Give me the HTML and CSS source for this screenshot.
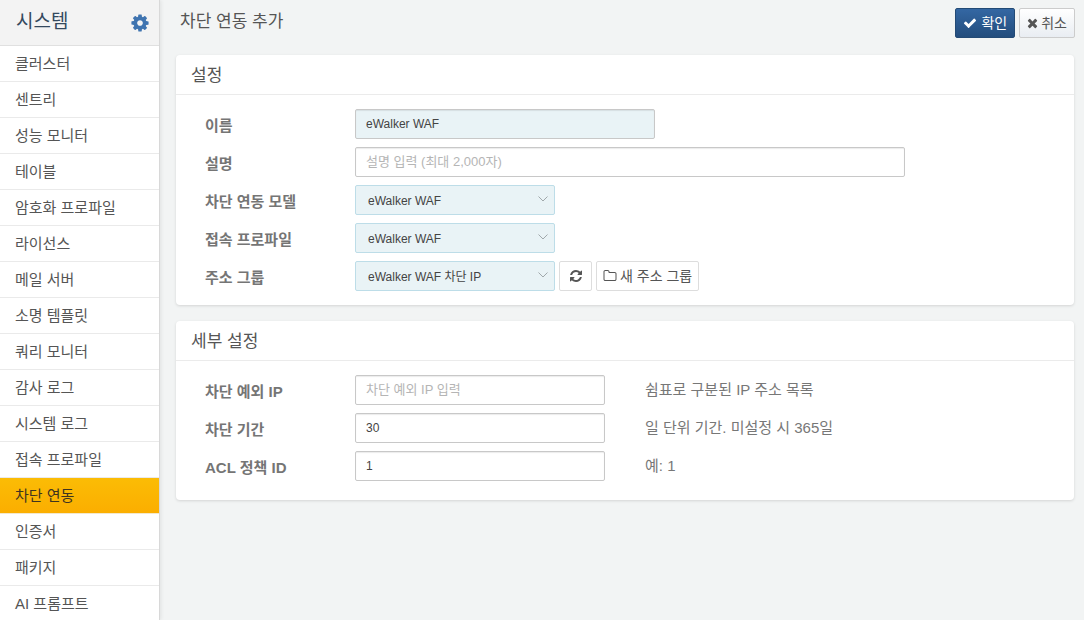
FILE: index.html
```html
<!DOCTYPE html>
<html lang="ko">
<head>
<meta charset="utf-8">
<meta name="viewport" content="width=device-width, initial-scale=1">
<title>차단 연동 추가</title>
<link rel="stylesheet" href="styles.css">
</head>
<body>
<aside class="sidebar">
  <header class="sidebar-head">
    <h2 class="sidebar-title">시스템</h2>
    <button class="gear" type="button" aria-label="시스템 설정"><svg viewBox="0 0 1792 1792" width="20" height="20"><path d="M1152 896q0-106-75-181t-181-75-181 75-75 181 75 181 181 75 181-75 75-181zm512-109v222q0 12-8 23t-20 13l-185 28q-19 54-39 91 35 50 107 138 10 12 10 25t-9 23q-27 37-99 108t-94 71q-12 0-26-9l-138-108q-44 23-91 38-16 136-29 186-7 28-36 28h-222q-14 0-24.500-8.500t-11.500-21.500l-28-184q-49-16-90-37l-141 107q-10 9-25 9-14 0-25-11-126-114-165-168-7-10-7-23 0-12 8-23 15-21 51-66.500t54-70.500q-27-50-41-99l-183-27q-13-2-21-12.500t-8-23.500v-222q0-12 8-23t19-13l186-28q14-46 39-92-40-57-107-138-10-12-10-24 0-10 9-23 26-36 98.500-107.500t94.500-71.500q13 0 26 10l138 107q44-23 91-38 16-136 29-186 7-28 36-28h222q14 0 24.500 8.500t11.500 21.500l28 184q49 16 90 37l142-107q9-9 24-9 13 0 25 10 129 119 165 170 7 8 7 22 0 12-8 23-15 21-51 66.500t-54 70.500q26 50 41 98l183 28q13 2 21 12.500t8 23.500z"/></svg></button>
  </header>
  <nav class="menu">
    <a class="menu-item" href="#">클러스터</a>
    <a class="menu-item" href="#">센트리</a>
    <a class="menu-item" href="#">성능 모니터</a>
    <a class="menu-item" href="#">테이블</a>
    <a class="menu-item" href="#">암호화 프로파일</a>
    <a class="menu-item" href="#">라이선스</a>
    <a class="menu-item" href="#">메일 서버</a>
    <a class="menu-item" href="#">소명 템플릿</a>
    <a class="menu-item" href="#">쿼리 모니터</a>
    <a class="menu-item" href="#">감사 로그</a>
    <a class="menu-item" href="#">시스템 로그</a>
    <a class="menu-item" href="#">접속 프로파일</a>
    <a class="menu-item active" href="#" aria-current="page">차단 연동</a>
    <a class="menu-item" href="#">인증서</a>
    <a class="menu-item" href="#">패키지</a>
    <a class="menu-item" href="#">AI 프롬프트</a>
  </nav>
</aside>
<main class="content">
  <header class="page-head">
    <h1 class="page-title">차단 연동 추가</h1>
    <div class="actions">
      <button class="btn btn-primary" type="submit" form="settings"><svg viewBox="0 0 1792 1792" width="14" height="14"><path d="M1671 566q0 40-28 68l-724 724-136 136q-28 28-68 28t-68-28l-136-136-362-362q-28-28-28-68t28-68l136-136q28-28 68-28t68 28l294 295 656-657q28-28 68-28t68 28l136 136q28 28 28 68z"/></svg>확인</button>
      <button class="btn btn-default" type="button"><svg viewBox="192 0 1408 1792" width="11" height="14"><path d="M1490 1322q0 40-28 68l-136 136q-28 28-68 28t-68-28l-294-294-294 294q-28 28-68 28t-68-28l-136-136q-28-28-28-68t28-68l294-294-294-294q-28-28-28-68t28-68l136-136q28-28 68-28t68 28l294 294 294-294q28-28 68-28t68 28l136 136q28 28 28 68t-28 68l-294 294 294 294q28 28 28 68z"/></svg>취소</button>
    </div>
  </header>
  <form class="cards" id="settings">
    <section class="card">
      <h3 class="card-title">설정</h3>
      <div class="card-body">
        <div class="row">
          <label class="label" for="name">이름</label>
          <input class="text text-medium filled" id="name" type="text" value="eWalker WAF">
        </div>
        <div class="row">
          <label class="label" for="desc">설명</label>
          <input class="text text-wide" id="desc" type="text" placeholder="설명 입력 (최대 2,000자)">
        </div>
        <div class="row">
          <label class="label" for="model">차단 연동 모델</label>
          <div class="select-wrap">
            <select class="select" id="model"><option>eWalker WAF</option></select>
            <svg class="chevron" viewBox="0 0 10 6" width="10" height="6"><path d="M.5.500 5 5 9.500.500"/></svg>
          </div>
        </div>
        <div class="row">
          <label class="label" for="profile">접속 프로파일</label>
          <div class="select-wrap">
            <select class="select" id="profile"><option>eWalker WAF</option></select>
            <svg class="chevron" viewBox="0 0 10 6" width="10" height="6"><path d="M.5.500 5 5 9.500.500"/></svg>
          </div>
        </div>
        <div class="row">
          <label class="label" for="group">주소 그룹</label>
          <div class="group-controls">
            <div class="select-wrap">
              <select class="select" id="group"><option>eWalker WAF 차단 IP</option></select>
              <svg class="chevron" viewBox="0 0 10 6" width="10" height="6"><path d="M.5.500 5 5 9.500.500"/></svg>
            </div>
            <button class="btn btn-light btn-icon" type="button" aria-label="새로 고침"><svg viewBox="0 0 1792 1792" width="14" height="14"><path d="M1639 1056q0 5-1 7-64 268-268 434.500t-478 166.500q-146 0-282.500-55t-243.500-157l-129 129q-19 19-45 19t-45-19-19-45v-448q0-26 19-45t45-19h448q26 0 45 19t19 45-19 45l-137 137q71 66 161 102t187 36q134 0 250-65t186-179q11-17 53-117 8-23 30-23h192q13 0 22.500 9.500t9.500 22.500zm25-800v448q0 26-19 45t-45 19h-448q-26 0-45-19t-19-45 19-45l138-138q-148-137-349-137-134 0-250 65t-186 179q-11 17-53 117-8 23-30 23h-199q-13 0-22.500-9.500t-9.500-22.500v-7q65-268 270-434.500t480-166.500q146 0 284 55.500t245 156.500l130-129q19-19 45-19t45 19 19 45z"/></svg></button>
            <button class="btn btn-light" type="button"><svg viewBox="0 0 1792 1792" width="14" height="14"><path d="M1600 1312v-704q0-40-28-68t-68-28h-704q-40 0-68-28t-28-68v-64q0-40-28-68t-68-28h-320q-40 0-68 28t-28 68v960q0 40 28 68t68 28h1216q40 0 68-28t28-68zm128-704v704q0 92-66 158t-158 66h-1216q-92 0-158-66t-66-158v-960q0-92 66-158t158-66h320q92 0 158 66t66 158v32h672q92 0 158 66t66 158z"/></svg>새 주소 그룹</button>
          </div>
        </div>
      </div>
    </section>
    <section class="card">
      <h3 class="card-title">세부 설정</h3>
      <div class="card-body card-body-roomy">
        <div class="row">
          <label class="label" for="except">차단 예외 IP</label>
          <input class="text text-short" id="except" type="text" placeholder="차단 예외 IP 입력">
          <span class="hint">쉼표로 구분된 IP 주소 목록</span>
        </div>
        <div class="row">
          <label class="label" for="period">차단 기간</label>
          <input class="text text-short" id="period" type="text" value="30">
          <span class="hint">일 단위 기간. 미설정 시 365일</span>
        </div>
        <div class="row">
          <label class="label" for="acl">ACL 정책 ID</label>
          <input class="text text-short" id="acl" type="text" value="1">
          <span class="hint">예: 1</span>
        </div>
      </div>
    </section>
  </form>
</main>
</body>
</html>
```
FILE: styles.css
```css
* {
  box-sizing: border-box;
}

body {
  display: flex;
  height: 100vh;
  margin: 0;
  background: #f2f4f4;
  color: #555;
  font: 15px/20px "Liberation Sans", "Noto Sans CJK KR", sans-serif;
}

button,
input,
select {
  font-family: inherit;
}

svg {
  flex: none;
  fill: currentColor;
}

h1,
h2,
h3 {
  margin: 0;
  font-weight: 400;
}

.sidebar {
  flex: 0 0 160px;
  overflow: hidden;
  background: #fff;
  border-right: 1px solid #d8d8d8;
  box-shadow: 1px 0 4px rgba(0, 0, 0, 0.08);
}

.sidebar-head {
  display: flex;
  align-items: center;
  justify-content: space-between;
  height: 46px;
  padding: 0 9px 2px 16px;
  background: #f3f3f3;
  border-bottom: 1px solid #e0e0e0;
}

.sidebar-title {
  color: #34495e;
  font-size: 19px;
  line-height: 24px;
}

.gear {
  display: flex;
  padding: 2px 0 0;
  border: 0;
  background: none;
  color: #3f74b0;
}

.menu-item {
  display: block;
  height: 36px;
  padding: 8px 15px 7px;
  border-bottom: 1px solid #eaeaea;
  color: #555;
  text-decoration: none;
}

.menu-item.active {
  background: linear-gradient(#fbbc05, #fbae00);
  border-bottom-color: #f3e8cc;
  color: #3f3420;
}

.content {
  flex: 1;
  min-width: 0;
  padding: 8px 10px 16px 16px;
  overflow: auto;
}

.page-head {
  display: flex;
  justify-content: space-between;
  min-height: 47px;
  padding-left: 4px;
}

.page-title {
  font-size: 17px;
  line-height: 28px;
}

.actions {
  display: flex;
  align-items: flex-start;
  gap: 4px;
  margin-right: -1px;
}

.btn {
  display: flex;
  align-items: center;
  gap: 3px;
  height: 30px;
  padding: 0 7px 1px;
  border: 1px solid #ccc;
  border-radius: 2px;
  color: #555;
  font-size: 14px;
  line-height: 20px;
  white-space: nowrap;
}

.btn-primary {
  gap: 4px;
  background: linear-gradient(#3467a3, #234d7d);
  border-color: #234a75;
  color: #fff;
}

.btn-default {
  background: linear-gradient(#fff, #e9edf2);
}

.btn-light {
  padding: 0 6px 1px;
  background: #fff;
  border-color: #ddd;
}

.btn-icon {
  justify-content: center;
  width: 33px;
}

.cards {
  display: grid;
  gap: 16px;
}

.card {
  background: #fff;
  border-radius: 4px;
  box-shadow: 0 1px 3px rgba(0, 0, 0, 0.13);
}

.card-title {
  height: 40px;
  padding: 9px 15px 6px;
  border-bottom: 1px solid #ebebeb;
  font-size: 17px;
  line-height: 24px;
}

.card-body {
  display: grid;
  gap: 8px;
  padding: 14px 29px;
}

.card-body-roomy {
  padding-bottom: 19px;
}

.row {
  display: flex;
  align-items: center;
  min-height: 30px;
}

.label {
  flex: 0 0 150px;
  padding-top: 4px;
  color: #757575;
  font-weight: 700;
}

.text {
  height: 30px;
  min-width: 0;
  padding: 0 10px;
  background: #fff;
  border: 1px solid #c8c8c8;
  border-radius: 2px;
  box-shadow: inset 0 1px 1px rgba(0, 0, 0, 0.08);
  color: #444;
  font-size: 12px;
}

.text::placeholder {
  color: #b5b5b5;
}

.text.filled {
  background: #e9f3f6;
}

.text-short {
  width: 250px;
}

.text-medium {
  width: 300px;
}

.text-wide {
  width: 550px;
}

.text-short::placeholder,
.text-wide::placeholder {
  font-size: 13px;
}

.select-wrap {
  position: relative;
  width: 200px;
}

.select {
  display: block;
  width: 100%;
  height: 30px;
  padding: 2px 24px 0 12px;
  appearance: none;
  background: #e9f3f6;
  border: 1px solid #bddde8;
  border-radius: 2px;
  color: #444;
  font-size: 12px;
}

.chevron {
  position: absolute;
  top: 11px;
  right: 7px;
  fill: none;
  stroke: #a0a8ab;
  pointer-events: none;
}

.group-controls {
  display: flex;
  gap: 4px;
}

.hint {
  margin-left: 40px;
  color: #777;
}
```
